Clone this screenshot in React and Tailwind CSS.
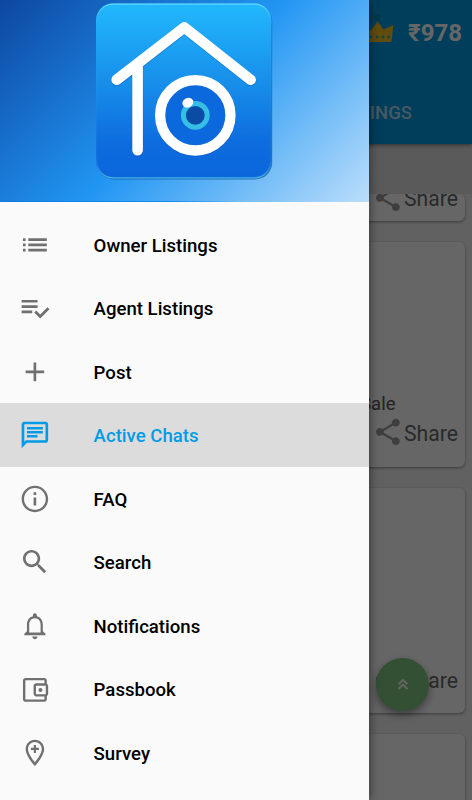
import React from "react";

const menuItems = [
  {
    label: "Owner Listings",
    path: "M3 13h2v-2H3v2zm0 4h2v-2H3v2zm0-8h2V7H3v2zm4 4h14v-2H7v2zm0 4h14v-2H7v2zM7 7v2h14V7H7z",
  },
  {
    label: "Agent Listings",
    path: "M14 10H2v2h12v-2zm0-4H2v2h12V6zM2 16h8v-2H2v2zm19.5-4.5L23 13l-6.99 7-4.51-4.5L13 14l3.01 3 5.49-5.5z",
  },
  { label: "Post", path: "M19 13h-6v6h-2v-6H5v-2h6V5h2v6h6v2z" },
  {
    label: "Active Chats",
    active: true,
    path: "M4 4h16v12H5.17L4 17.17V4m0-2c-1.1 0-1.99.9-1.99 2L2 22l4-4h14c1.1 0 2-.9 2-2V4c0-1.1-.9-2-2-2H4zm2 10h8v2H6v-2zm0-3h12v2H6V9zm0-3h12v2H6V6z",
  },
  {
    label: "FAQ",
    path: "M11 7h2v2h-2zm0 4h2v6h-2zm1-9C6.48 2 2 6.48 2 12s4.48 10 10 10 10-4.48 10-10S17.52 2 12 2zm0 18.2c-4.52 0-8.2-3.68-8.2-8.2S7.48 3.8 12 3.8s8.2 3.68 8.2 8.2-3.68 8.2-8.2 8.2z",
  },
  {
    label: "Search",
    path: "M15.5 14h-.79l-.28-.27C15.41 12.59 16 11.11 16 9.5 16 5.91 13.09 3 9.5 3S3 5.91 3 9.5 5.91 16 9.5 16c1.61 0 3.09-.59 4.23-1.57l.27.28v.79l5 4.99L20.49 19l-4.99-5zm-6 0C7.01 14 5 11.99 5 9.5S7.01 5 9.5 5 14 7.01 14 9.5 11.99 14 9.5 14z",
  },
  {
    label: "Notifications",
    path: "M12 22c1.1 0 2-.9 2-2h-4c0 1.1.9 2 2 2zm6-6v-5c0-3.07-1.63-5.64-4.5-6.32V4c0-.83-.67-1.5-1.5-1.5s-1.5.67-1.5 1.5v.68C7.64 5.36 6 7.92 6 11v5l-2 2v1h16v-1l-2-2zm-1.7 1H7.7v-6c0-2.6 1.7-4.7 4.3-4.7s4.3 2.1 4.3 4.7v6z",
  },
  {
    label: "Passbook",
    path: "M21 7.28V5c0-1.1-.9-2-2-2H5c-1.11 0-2 .9-2 2v14c0 1.1.89 2 2 2h14c1.1 0 2-.9 2-2v-2.28c.59-.35 1-.98 1-1.72V9c0-.74-.41-1.37-1-1.72zM20.2 8.8v6.4h-7.4V8.8h7.4zM4.8 19.2V4.8h14.4V7H13c-1.1 0-2 .9-2 2v6c0 1.1.9 2 2 2h6.2v2.2H4.8zM16.2 10.5a1.5 1.5 0 1 0 0 3 1.5 1.5 0 0 0 0-3z",
  },
  {
    label: "Survey",
    path: "M12 2C8.13 2 5 5.13 5 9c0 5.25 7 13 7 13s7-7.75 7-13c0-3.87-3.13-7-7-7zM6.8 9c0-2.87 2.33-5.2 5.2-5.2s5.2 2.33 5.2 5.2c0 2.9-2.9 7.2-5.2 10C9.7 16.2 6.8 11.9 6.8 9zM11.2 6h1.6v2.2H15v1.6h-2.2V12h-1.6V9.8H9V8.2h2.2z",
  },
];

const SHARE_PATH =
  "M18 16.08c-.76 0-1.44.3-1.96.77L8.91 12.7c.05-.23.09-.46.09-.7s-.04-.47-.09-.7l7.05-4.11c.54.5 1.25.81 2.04.81 1.66 0 3-1.34 3-3s-1.34-3-3-3-3 1.34-3 3c0 .24.04.47.09.7L8.04 9.81C7.5 9.31 6.79 9 6 9c-1.66 0-3 1.34-3 3s1.34 3 3 3c.79 0 1.5-.31 2.04-.81l7.12 4.16c-.05.21-.08.43-.08.65 0 1.61 1.31 2.92 2.92 2.92s2.92-1.31 2.92-2.92-1.31-2.92-2.92-2.92z";

function Icon({ path, className = "" }) {
  return (
    <svg viewBox="0 0 24 24" fill="currentColor" className={`size-[31.8px] shrink-0 ${className}`}>
      <path d={path} />
    </svg>
  );
}

function Logo() {
  return (
    <svg viewBox="0 0 180 180" className="h-[180px] w-[180px]">
      <defs>
        <linearGradient id="tile" x1="0" y1="0" x2="0" y2="1">
          <stop offset="0" stopColor="#22b8fd" />
          <stop offset="0.5" stopColor="#168ae8" />
          <stop offset="0.8" stopColor="#0d6cde" />
          <stop offset="1" stopColor="#0b66dc" />
        </linearGradient>
        <linearGradient id="edge" x1="0" y1="0" x2="0" y2="1">
          <stop offset="0" stopColor="#62d4fc" />
          <stop offset="0.12" stopColor="#22a8f2" stopOpacity="0.3" />
          <stop offset="0.88" stopColor="#1b7fdf" stopOpacity="0.3" />
          <stop offset="1" stopColor="#45b4e4" />
        </linearGradient>
      </defs>
      <rect x="2.8" y="4.6" width="175.4" height="174.8" rx="17" fill="#1b5c9c" opacity="0.75" />
      <rect x="2" y="3.4" width="175.4" height="175" rx="17" fill="url(#tile)" />
      <rect x="2.6" y="4.2" width="174.2" height="173.6" rx="16.5" fill="none" stroke="url(#edge)" strokeWidth="1.3" />
      <g fill="none" strokeLinecap="round" strokeLinejoin="round">
        <path d="M22.9 80.6 90.4 28.2l66.6 52.4M43.8 66v85" stroke="#0b4fae" strokeOpacity="0.35" strokeWidth="11" />
        <path d="M22.7 79.8 90.3 27.4 156.7 79.8M43.6 65v85.3" stroke="#fff" strokeWidth="10.6" />
      </g>
      <circle cx="101.6" cy="116" r="40.6" fill="#0b4fae" opacity="0.35" />
      <circle cx="101.3" cy="115.3" r="35.2" fill="#0b68dd" stroke="#fff" strokeWidth="10.3" />
      <circle cx="101.3" cy="115.3" r="11.9" fill="#0a4ca5" stroke="#35bfe5" strokeWidth="5" />
      <ellipse cx="93.8" cy="102.7" rx="5.6" ry="4.7" fill="#fff" transform="rotate(-25 93.8 102.7)" />
    </svg>
  );
}

function Crown() {
  return (
    <svg viewBox="0 0 34 30" className="h-[30px] w-[34px]">
      <circle cx="17.5" cy="4.5" r="3.6" fill="#0290c0" />
      <path d="M1.7 12l9 5.5L17.7 8.5l5.8 8L33.3 12 31.5 29h-28z" fill="#f0bd20" />
      <g fill="#26b09a">
        <circle cx="5.5" cy="24" r="1.4" />
        <circle cx="11" cy="24" r="1.4" />
        <circle cx="17" cy="24" r="1.4" />
        <circle cx="23" cy="24" r="1.4" />
        <circle cx="28.5" cy="24" r="1.4" />
      </g>
    </svg>
  );
}

function ShareRow() {
  return (
    <div className="flex h-8 shrink-0 items-center justify-end pr-[6.5px] text-[21.2px] text-[#6a6a6a]">
      <Icon path={SHARE_PATH} className="text-[#9c9c9c]" />
      <span className="pt-[3px] leading-none">Share</span>
    </div>
  );
}

function ListingCard({ tag, empty, className }) {
  return (
    <div
      className={`flex shrink-0 flex-col justify-end rounded-[6px] bg-white shadow-[0_1px_3px_rgba(0,0,0,0.4)] ${className}`}
    >
      {tag && (
        <div className="mb-px pr-[69px] text-right text-[18.55px] leading-[22px] text-[#555]">{tag}</div>
      )}
      {!empty && <ShareRow />}
    </div>
  );
}

function ListingsPage() {
  return (
    <div className="isolate flex h-full flex-col bg-[#f2f2f2]">
      <header className="z-10 flex h-36 shrink-0 flex-col bg-[#039be5] text-white shadow-[0_1px_4px_rgba(0,0,0,0.5)]">
        <div className="flex h-[74px] items-start justify-end gap-[14px] pt-[13px] pr-[10px]">
          <Crown />
          <span className="pt-[6px] text-[24px] leading-[28px] font-bold">₹978</span>
        </div>
        <div className="flex flex-1 items-center justify-end pt-[9px] pr-[60px] text-[18.55px] font-medium text-white/70">
          LISTINGS
        </div>
      </header>
      <div className="h-[50px] shrink-0 bg-[#e1e1e1]" />
      <main className="flex flex-1 flex-col gap-[21px] overflow-hidden pr-[7.5px] pl-2">
        <ListingCard className="h-[27px] pb-[7.5px]" />
        <ListingCard className="h-[225px] pb-[19px]" tag="For Sale" />
        <ListingCard className="h-[225px] pb-[18px]" />
        <ListingCard className="h-[225px]" empty />
      </main>
    </div>
  );
}

function Drawer() {
  return (
    <aside className="absolute inset-y-0 left-0 flex w-[369px] flex-col bg-[#fafafa] shadow-[0_0_10px_rgba(0,0,0,0.55)]">
      <div className="flex h-[202px] shrink-0 flex-col justify-between bg-[linear-gradient(135deg,#0d47a1_0%,#2196f3_50%,#bbdefb_100%)]">
        <div className="pl-[94px]">
          <Logo />
        </div>
        <div className="h-px bg-[linear-gradient(90deg,#0d7be0,#0d8cf0_45%,transparent_65%)]" />
      </div>
      <nav className="pt-[10.8px]">
        {menuItems.map((item) => (
          <a
            key={item.label}
            className={`flex h-[63.55px] items-center gap-[42.5px] pl-[19.3px] text-[18.6px] font-medium ${
              item.active ? "bg-[#dcdcdc] text-[#039be5]" : "text-black"
            }`}
          >
            <Icon path={item.path} className={item.active ? "" : "text-[#707070]"} />
            <span className="pt-[4px]">{item.label}</span>
          </a>
        ))}
      </nav>
    </aside>
  );
}

export default function App() {
  return (
    <div className="relative h-[800px] w-[472px] overflow-hidden font-[Roboto,sans-serif]">
      <ListingsPage />
      <button className="absolute top-[657.5px] left-[376px] flex size-[53px] items-center justify-center rounded-full bg-[#81c784] shadow-[0_4px_8px_rgba(0,0,0,0.4)]">
        <svg viewBox="0 0 12 12" className="size-3" fill="none" stroke="#fff" strokeWidth="1.8">
          <path d="M1.6 6.2 6 1.8l4.4 4.4M1.6 11 6 6.6l4.4 4.4" />
        </svg>
      </button>
      <div className="absolute inset-0 bg-black/60" />
      <Drawer />
    </div>
  );
}
